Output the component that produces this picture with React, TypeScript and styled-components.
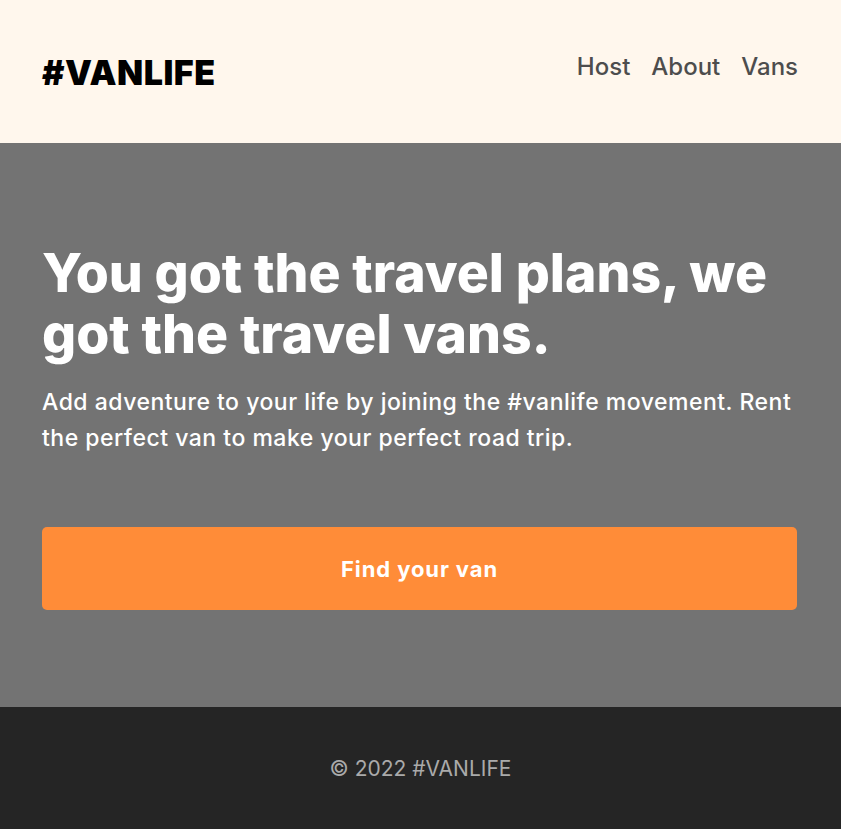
import React from "react";
import styled, { createGlobalStyle } from "styled-components";

const Global = createGlobalStyle`
  html, body { margin: 0; padding: 0; }
  body { font-family: Inter, "Noto Sans", sans-serif; background: #252525; }
  * { box-sizing: border-box; }
`;

const Page = styled.div`
  display: flex;
  flex-direction: column;
  min-height: 829px;
`;

const Header = styled.header`
  height: 143px;
  background: #fff7ed;
  display: flex;
  align-items: center;
  justify-content: space-between;
  padding: 0 43px 0 42px;
`;

const Logo = styled.a`
  font-size: 34px;
  font-weight: 900;
  color: #000;
  text-decoration: none;
  letter-spacing: 0.5px;
  margin-top: 2px;
`;

const Nav = styled.nav`
  display: flex;
  gap: 21px;
  margin-top: -10px;
`;

const NavLink = styled.a`
  font-size: 24px;
  font-weight: 500;
  color: #4d4d4d;
  text-decoration: none;
`;

const Hero = styled.section`
  flex: 0 0 564px;
  background: #737373;
  padding: 99px 44px 0 42px;
  color: #fff;
`;

const Title = styled.h1`
  margin: 0;
  font-size: 53.5px;
  font-weight: 800;
  line-height: 61px;
`;

const Lead = styled.p`
  margin: 20px 0 0;
  font-size: 23px;
  font-weight: 500;
  letter-spacing: 0.5px;
  line-height: 36px;
`;

const CTA = styled.a`
  display: flex;
  align-items: center;
  justify-content: center;
  height: 83px;
  margin-top: 71px;
  background: #ff8c38;
  border-radius: 5px;
  color: #fff;
  font-size: 22px;
  font-weight: 700;
  letter-spacing: 0.9px;
  text-decoration: none;
`;

const Footer = styled.footer`
  flex: 1;
  background: #252525;
  color: #aaaaaa;
  display: flex;
  justify-content: center;
  padding-top: 49px;
  font-size: 21px;
  font-weight: 400;
`;

export default function App() {
  return (
    <Page>
      <Global />
      <Header>
        <Logo href="#">#VANLIFE</Logo>
        <Nav>
          <NavLink href="#">Host</NavLink>
          <NavLink href="#">About</NavLink>
          <NavLink href="#">Vans</NavLink>
        </Nav>
      </Header>
      <Hero>
        <Title>You got the travel plans, we got the travel vans.</Title>
        <Lead>
          Add adventure to your life by joining the #vanlife movement. Rent the
          perfect van to make your perfect road trip.
        </Lead>
        <CTA href="#">Find your van</CTA>
      </Hero>
      <Footer>© 2022 #VANLIFE</Footer>
    </Page>
  );
}
